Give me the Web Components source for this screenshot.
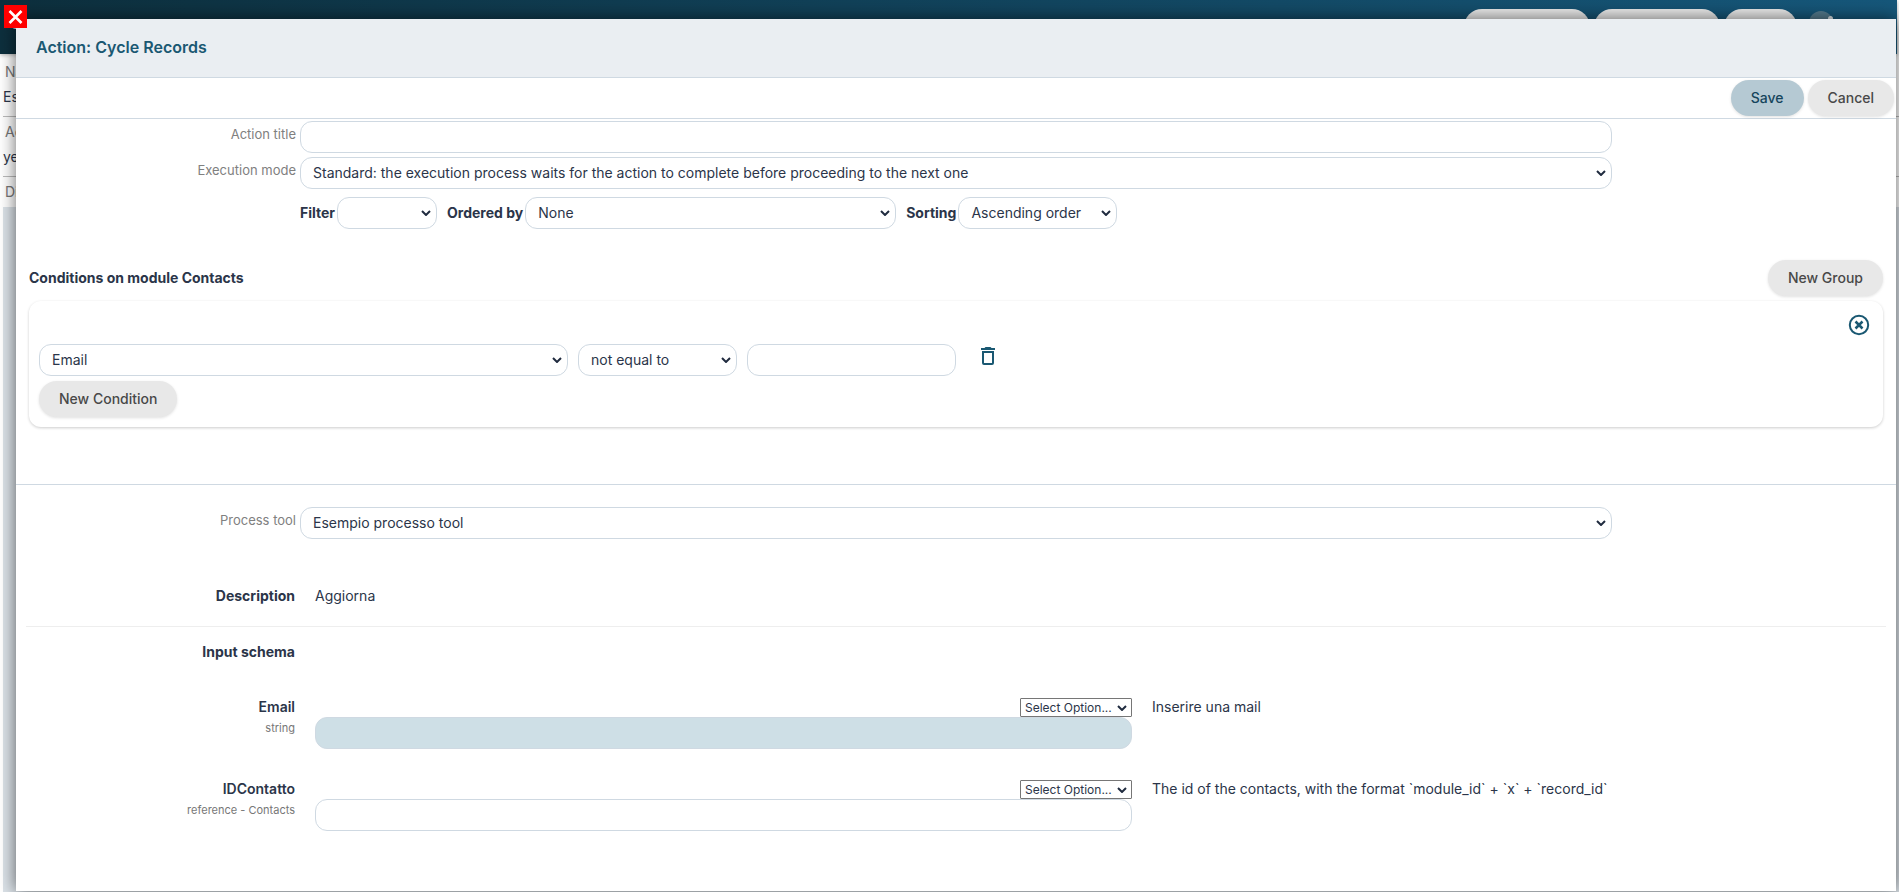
<!DOCTYPE html>
<html lang="en">
<head>
<meta charset="utf-8">
<title>Action: Cycle Records</title>
<style>
  html, body { height: 100%; margin: 0; }
  body {
    --ink: #2b3549;
    --brand: #1a5872;
    --line: #cfd9e2;
    position: relative;
    overflow: hidden;
    background: #fff;
    color: var(--ink);
    font: 14px/20px Inter, "Liberation Sans", sans-serif;
  }
</style>
</head>
<body>
<process-page></process-page>
<action-dialog heading="Action: Cycle Records">
  <pill-button slot="actions" tone="primary">Save</pill-button>
  <pill-button slot="actions">Cancel</pill-button>
  <action-settings></action-settings>
  <condition-panel heading="Conditions on module Contacts"></condition-panel>
  <process-tool></process-tool>
</action-dialog>

<script>
const chevron = `url("data:image/svg+xml,%3Csvg xmlns='http://www.w3.org/2000/svg' width='10' height='6' viewBox='0 0 10 6'%3E%3Cpath d='M1 1l4 4 4-4' fill='none' stroke='%23202b3f' stroke-width='2'/%3E%3C/svg%3E")`;

const controls = `
  * { box-sizing: border-box; }
  .control {
    display: block; width: 100%; height: 32px; margin: 0; padding: 0 12px;
    border: 1px solid var(--line); border-radius: 12px;
    background-color: #fff; color: var(--ink);
    font: inherit; outline: 0;
  }
  select.control {
    appearance: none; padding: 0 20px 1px 12px;
    background-image: ${chevron}; background-repeat: no-repeat; background-position: right 5px center;
  }
`;

function define(name, render) {
  customElements.define(name, class extends HTMLElement {
    constructor() {
      super();
      this.attachShadow({ mode: "open" });
    }
    connectedCallback() {
      this.shadowRoot.innerHTML = render(this);
    }
  });
}

const attr = (el, name) => el.getAttribute(name) || "";

define("process-page", () => `
  <style>
    :host { display: flex; flex-direction: column; height: 100%; overflow: hidden; background: #fff; }
    header {
      display: flex; justify-content: flex-end; gap: 4px; flex: none;
      box-sizing: border-box; height: 54px; margin-right: 2px; padding: 9px 64px 0 11px;
      background: linear-gradient(90deg, #0d2f3d, #16577a);
      color: #fff; box-shadow: 0 1px 4px rgba(0,0,0,.3);
    }
    header b { margin: 4px auto 0 0; font-size: 16px; font-weight: 500; }
    .pill { width: 126px; height: 36px; border-radius: 18px; background: #e8e8e8; }
    .pill.small { width: 73px; }
    .avatar { width: 24px; height: 24px; margin: 2px 0 0 8px; border-radius: 50%; background: #54798c; }
    .avatar::after { content: ""; display: block; width: 5px; height: 5px; margin: 5px 0 0 19px; border-radius: 50%; background: #dde4e8; }
    dl { margin: 0; padding: 8px 0 0 3px; flex: none; }
    dt { padding: 0 2px; line-height: 20px; color: #777; }
    dd { height: 29px; margin: 0 0 5px; padding-top: 5px; line-height: 20px; border-bottom: 1px solid #bbb; }
    .canvas { flex: 1; background: #dbe2e8; margin: 5px 0 0 3px; }
  </style>
  <header><b>S</b><i class="pill"></i><i class="pill"></i><i class="pill small"></i><i class="avatar"></i></header>
  <dl><dt>Na</dt><dd>Es</dd><dt>Ac</dt><dd>ye</dd><dt>Di</dt></dl>
  <div class="canvas"></div>
`);

define("pill-button", el => `
  <style>
    :host { display: block; flex: none; }
    button {
      display: block; height: 36px; margin: 0; padding: 0 20px; border: 0; border-radius: 18px;
      background: #e8e8e8; color: #484848; font: inherit; font-weight: 500;
      box-shadow: 0 1px 3px rgba(0,0,0,.12); cursor: pointer;
    }
    .primary { background: #b5c9d3; color: #15455c; }
  </style>
  <button type="button" class="${attr(el, "tone")}"><slot></slot></button>
`);

define("action-dialog", el => `
  <style>
    :host {
      display: flex; flex-direction: column;
      position: absolute; inset: 19px 3px 1px 16px;
      background: #fff; box-shadow: 0 0 16px rgba(0,0,0,.6);
    }
    header {
      display: flex; align-items: center; box-sizing: border-box; height: 59px; padding: 0 20px 2px;
      background: #eaeef2; border-bottom: 1px solid var(--line);
    }
    h1 { margin: 0; font-size: 16px; font-weight: 600; color: var(--brand); }
    .bar {
      display: flex; justify-content: flex-end; align-items: center; gap: 4px;
      height: 40px; padding: 0 2px; border-bottom: 1px solid var(--line);
    }
    main { flex: 1; min-height: 0; overflow: hidden; }
    .close {
      position: absolute; top: -14px; left: -12px;
      width: 23px; height: 23px; padding: 0; border: 0; background: #f00; cursor: pointer;
    }
    svg { display: block; width: 23px; height: 23px; }
  </style>
  <header><h1>${attr(el, "heading")}</h1></header>
  <div class="bar"><slot name="actions"></slot></div>
  <main><slot></slot></main>
  <button class="close" type="button" aria-label="Close">
    <svg viewBox="0 0 23 23" fill="none" stroke="#fff" stroke-width="2.6"><path d="M5.500 6 17.500 18M17.500 6 5.500 18"/></svg>
  </button>
`);

define("form-row", el => {
  const value = attr(el, "value");
  const control = el.hasAttribute("select")
    ? `<select id="c" class="control"><option>${value}</option></select>`
    : `<input id="c" class="control" type="text" value="${value}">`;
  return `
  <style>
    ${controls}
    :host { display: grid; grid-template-columns: 15% 70%; }
    label { padding: 5px 2px 0; text-align: right; font-size: 13px; color: #808080; }
    div { padding: 2px; }
  </style>
  <label for="c">${attr(el, "label")}</label><div>${control}</div>`;
});

define("action-settings", () => `
  <style>
    ${controls}
    :host { display: block; }
    .sort { display: flex; align-items: center; gap: 10px; margin-left: 15%; padding: 6px 2px 0; }
    .pair { display: flex; align-items: center; gap: 2px; }
    label { font-weight: 700; }
    #filter { width: 100px; }
    #order { width: 371px; }
    #sorting { width: 159px; }
  </style>
  <form-row label="Action title"></form-row>
  <form-row label="Execution mode" select value="Standard: the execution process waits for the action to complete before proceeding to the next one"></form-row>
  <div class="sort">
    <div class="pair"><label for="filter">Filter</label><select id="filter" class="control"><option></option></select></div>
    <div class="pair"><label for="order">Ordered by</label><select id="order" class="control"><option>None</option></select></div>
    <div class="pair"><label for="sorting">Sorting</label><select id="sorting" class="control"><option>Ascending order</option><option>Descending order</option></select></div>
  </div>
`);

define("condition-panel", el => `
  <style>
    ${controls}
    :host { display: block; padding: 31px 13px 57px; border-bottom: 1px solid var(--line); }
    .head { display: flex; align-items: center; justify-content: space-between; }
    h2 { margin: 0; font-size: 14px; font-weight: 700; }
    .card {
      margin-top: 5px; padding: 13px 10px 10px; border-radius: 12px;
      box-shadow: 0 1px 3px rgba(0,0,0,.2);
    }
    .top { display: flex; justify-content: flex-end; padding-right: 3px; height: 30px; }
    .row { display: flex; gap: 10px; margin-bottom: 5px; }
    #field { flex: 0 1 529px; min-width: 0; }
    #operator { width: 159px; }
    #value { width: 209px; }
    .icon { width: 22px; height: 22px; padding: 0; border: 0; background: none; color: var(--brand); cursor: pointer; }
    .trash { margin-left: 11px; height: 25px; }
    svg { display: block; width: 22px; height: 22px; }
  </style>
  <div class="head"><h2>${attr(el, "heading")}</h2><pill-button>New Group</pill-button></div>
  <div class="card">
    <div class="top">
      <button class="icon" type="button" aria-label="Remove group">
        <svg viewBox="0 0 22 22" fill="none" stroke="currentColor" stroke-width="2"><circle cx="11" cy="11" r="9.200"/><path stroke-width="2.500" d="M7.500 7.500l7 7M14.500 7.500l-7 7"/></svg>
      </button>
    </div>
    <div class="row">
      <select id="field" class="control" aria-label="Field"><option>Email</option></select>
      <select id="operator" class="control" aria-label="Operator"><option>not equal to</option></select>
      <input id="value" class="control" type="text" aria-label="Value">
      <button class="icon trash" type="button" aria-label="Delete condition">
        <svg viewBox="0 0 22 22"><path fill="currentColor" d="M8.500 1h5l1 1H18v2H4V2h3.500zM5 5h12v12q0 2-2 2H7q-2 0-2-2zm2 2v10h8V7z" fill-rule="evenodd"/></svg>
      </button>
    </div>
    <pill-button>New Condition</pill-button>
  </div>
`);

define("schema-row", el => `
  <style>
    ${controls}
    :host { display: grid; grid-template-columns: 15% 45% 40%; align-items: start; height: 82px; }
    .name, .help { padding: 0 10px; }
    .name { text-align: right; }
    label { display: block; font-weight: 600; }
    small { display: block; font-size: 11px; color: #777; line-height: 22px; }
    .field { padding: 1px 10px 0; }
    .pick {
      appearance: none; display: block; width: 112px; height: 19px; margin: 0 0 0 auto; padding: 0 16px 0 4px;
      border: 1px solid #767676; border-radius: 1px; color: var(--ink);
      background: #fff ${chevron} no-repeat right 4px center;
      font: inherit; font-size: 12px; line-height: 16px;
    }
    .active { background-color: #cedfe6; }
  </style>
  <div class="name"><label for="c">${attr(el, "name")}</label><small>${attr(el, "type")}</small></div>
  <div class="field">
    <select class="pick" aria-label="Insert option"><option>Select Option...</option></select>
    <input id="c" type="text" class="control ${el.hasAttribute("active") ? "active" : ""}">
  </div>
  <div class="help"><slot></slot></div>
`);

define("process-tool", () => `
  <style>
    :host { display: block; padding-top: 20px; }
    section { margin: 0 10px; }
    .row { display: grid; grid-template-columns: 15% 85%; }
    h3, p { margin: 0; padding: 0 10px; font-size: 14px; }
    h3 { text-align: right; font-weight: 700; }
    .about { padding: 45px 0 20px; border-bottom: 1px solid #eee; }
    .schema { padding: 15px 0 35px; }
  </style>
  <form-row label="Process tool" select value="Esempio processo tool"></form-row>
  <section>
    <div class="row about"><h3>Description</h3><p>Aggiorna</p></div>
    <div class="row schema"><h3>Input schema</h3></div>
    <schema-row name="Email" type="string" active>Inserire una mail</schema-row>
    <schema-row name="IDContatto" type="reference - Contacts">The id of the contacts, with the format \`module_id\` + \`x\` + \`record_id\`</schema-row>
  </section>
`);
</script>
</body>
</html>
